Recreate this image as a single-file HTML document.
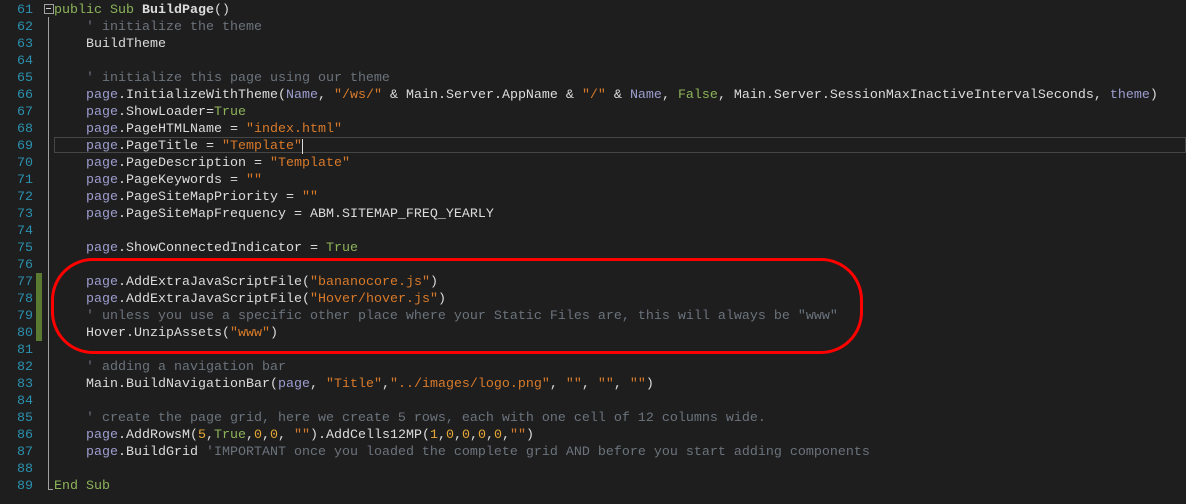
<!DOCTYPE html>
<html><head><meta charset="utf-8"><style>
body{margin:0;width:1186px;height:504px;background:#1e1e1e;overflow:hidden;position:relative;font-family:"Liberation Mono",monospace;font-size:13.33px;}
.ln{position:absolute;left:0;width:33px;text-align:right;color:#2b91af;}
.l{position:absolute;left:54px;white-space:pre;color:#dcdcdc;}
.row{position:absolute;left:0;height:17px;line-height:17px;width:1186px;}
.c{color:#57606a;color:#6b737c}
.s{color:#d87a2a}
.k{color:#8db35a}
.v{color:#9d9dd0}
.n{color:#e6a735}
</style></head><body>
<div style="position:absolute;left:48px;top:17px;width:1px;height:473px;background:#a0a0a0"></div>
<div style="position:absolute;left:48px;top:489px;width:5px;height:1px;background:#a0a0a0"></div>
<div style="position:absolute;left:44px;top:4px;width:8px;height:8px;border:1px solid #a0a0a0;background:#1e1e1e"></div>
<div style="position:absolute;left:46px;top:8px;width:5px;height:1px;background:#ccc"></div>
<div style="position:absolute;left:36px;top:273px;width:6px;height:68px;background:#5a7a32"></div>
<div style="position:absolute;left:54px;top:137px;width:1132px;height:16px;border:1px solid #464646;box-sizing:border-box"></div>
<div style="position:absolute;left:51px;top:258px;width:812px;height:96px;border:3px solid #f00;border-radius:42px;box-sizing:border-box"></div>
<div id="code"></div>
<script>
var L=[
'<span class="k">public</span> <span class="k">Sub</span> <b>BuildPage</b>()',
'    <span class="c">\' initialize the theme</span>',
'    BuildTheme',
'',
'    <span class="c">\' initialize this page using our theme</span>',
'    <span class="v">page</span>.InitializeWithTheme(<span class="v">Name</span>, <span class="s">"/ws/"</span> &amp; Main.Server.AppName &amp; <span class="s">"/"</span> &amp; <span class="v">Name</span>, <span class="k">False</span>, Main.Server.SessionMaxInactiveIntervalSeconds, <span class="v">theme</span>)',
'    <span class="v">page</span>.ShowLoader=<span class="k">True</span>',
'    <span class="v">page</span>.PageHTMLName = <span class="s">"index.html"</span>',
'    <span class="v">page</span>.PageTitle = <span class="s">"Template"</span><span style="border-left:1px solid #ddd"></span>',
'    <span class="v">page</span>.PageDescription = <span class="s">"Template"</span>',
'    <span class="v">page</span>.PageKeywords = <span class="s">""</span>',
'    <span class="v">page</span>.PageSiteMapPriority = <span class="s">""</span>',
'    <span class="v">page</span>.PageSiteMapFrequency = ABM.SITEMAP_FREQ_YEARLY',
'',
'    <span class="v">page</span>.ShowConnectedIndicator = <span class="k">True</span>',
'',
'    <span class="v">page</span>.AddExtraJavaScriptFile(<span class="s">"bananocore.js"</span>)',
'    <span class="v">page</span>.AddExtraJavaScriptFile(<span class="s">"Hover/hover.js"</span>)',
'    <span class="c">\' unless you use a specific other place where your Static Files are, this will always be "www"</span>',
'    Hover.UnzipAssets(<span class="s">"www"</span>)',
'',
'    <span class="c">\' adding a navigation bar</span>',
'    Main.BuildNavigationBar(<span class="v">page</span>, <span class="s">"Title"</span>,<span class="s">"../images/logo.png"</span>, <span class="s">""</span>, <span class="s">""</span>, <span class="s">""</span>)',
'',
'    <span class="c">\' create the page grid, here we create 5 rows, each with one cell of 12 columns wide.</span>',
'    <span class="v">page</span>.AddRowsM(<span class="n">5</span>,<span class="k">True</span>,<span class="n">0</span>,<span class="n">0</span>, <span class="s">""</span>).AddCells12MP(<span class="n">1</span>,<span class="n">0</span>,<span class="n">0</span>,<span class="n">0</span>,<span class="n">0</span>,<span class="s">""</span>)',
'    <span class="v">page</span>.BuildGrid <span class="c">\'IMPORTANT once you loaded the complete grid AND before you start adding components</span>',
'',
'<span class="k">End</span> <span class="k">Sub</span>'];
var h='';
for(var i=0;i<L.length;i++){var t=2+17*i;
h+='<div class="row" style="top:'+t+'px"><span class="ln">'+(61+i)+'</span><span class="l">'+L[i]+'</span></div>';}
document.getElementById('code').innerHTML=h;
</script>
</body></html>
